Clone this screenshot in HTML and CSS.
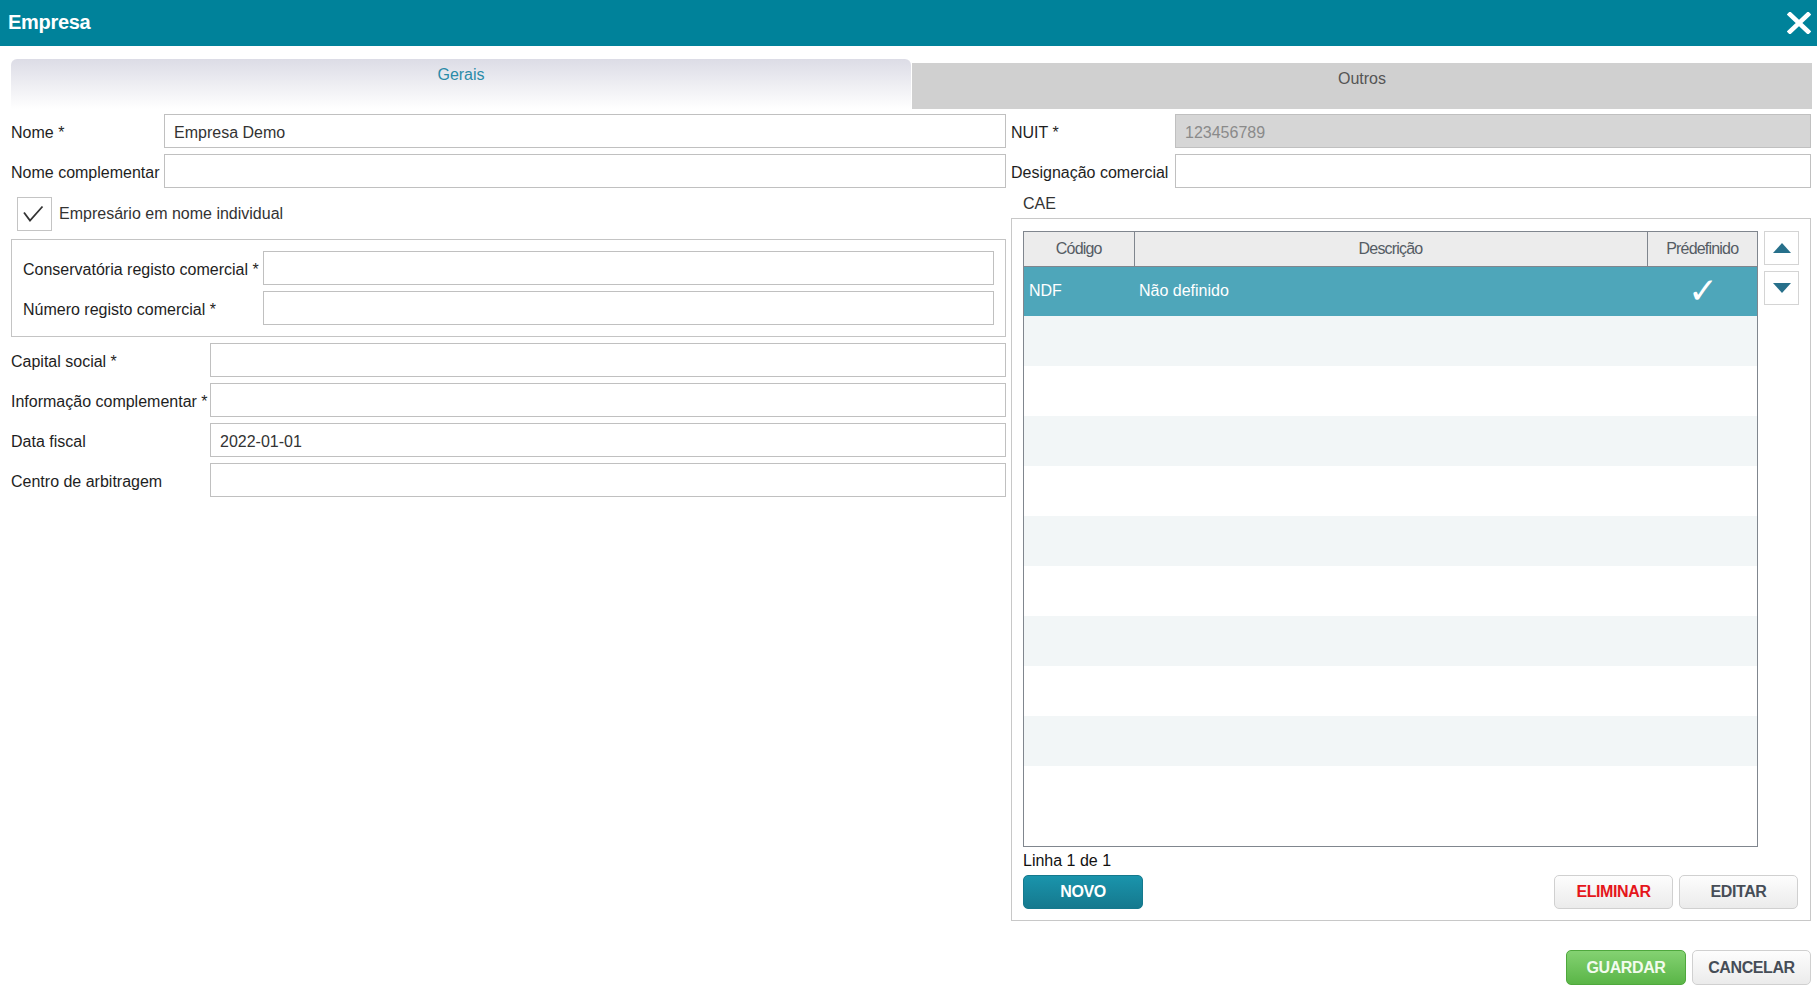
FILE: index.html
```html
<!DOCTYPE html>
<html lang="pt">
<head>
    <meta charset="UTF-8">
    <meta name="viewport" content="width=device-width, initial-scale=1.0">
    <title>Empresa</title>
    <link rel="stylesheet" href="styles.css">
</head>
<body>
    <div class="titlebar">
        <h1>Empresa</h1>
        <button class="close-btn" title="Fechar">
            <svg width="24" height="22" viewBox="0 0 24 22">
                <path d="M3 2.5 L21 19.5 M21 2.5 L3 19.5" stroke="#fff" stroke-width="4.6" stroke-linecap="square" fill="none"/>
            </svg>
        </button>
    </div>

    <div class="dialog">
        <div class="tabs">
            <div class="tab active">Gerais</div>
            <div class="tab">Outros</div>
        </div>

        <div class="content">
            <div class="col-left">
                <div class="field w-nome">
                    <label>Nome *</label>
                    <input type="text" value="Empresa Demo">
                </div>
                <div class="field w-nome">
                    <label>Nome complementar</label>
                    <input type="text">
                </div>

                <div class="check-row">
                    <span class="checkbox">
                        <svg width="33" height="32" viewBox="0 0 33 32">
                            <path d="M6 14.5 L12 22.5 L24.5 8.5" stroke="#333" stroke-width="1.8" fill="none"/>
                        </svg>
                    </span>
                    <span>Empresário em nome individual</span>
                </div>

                <div class="group">
                    <div class="field w-group">
                        <label>Conservatória registo comercial *</label>
                        <input type="text">
                    </div>
                    <div class="field w-group">
                        <label>Número registo comercial *</label>
                        <input type="text">
                    </div>
                </div>

                <div class="field w-capital">
                    <label>Capital social *</label>
                    <input type="text">
                </div>
                <div class="field w-capital">
                    <label>Informação complementar *</label>
                    <input type="text">
                </div>
                <div class="field w-capital">
                    <label>Data fiscal</label>
                    <input type="text" value="2022-01-01">
                </div>
                <div class="field w-capital">
                    <label>Centro de arbitragem</label>
                    <input type="text">
                </div>
            </div>

            <div class="col-right">
                <div class="field w-right">
                    <label>NUIT *</label>
                    <input type="text" value="123456789" disabled>
                </div>
                <div class="field w-right">
                    <label>Designação comercial</label>
                    <input type="text">
                </div>

                <div class="cae-label">CAE</div>
                <div class="cae-box">
                    <div class="cae-top">
                        <div class="grid-wrap">
                            <table class="grid">
                                <colgroup>
                                    <col class="c-code">
                                    <col>
                                    <col class="c-def">
                                </colgroup>
                                <thead>
                                    <tr>
                                        <th>Código</th>
                                        <th>Descrição</th>
                                        <th>Prédefinido</th>
                                    </tr>
                                </thead>
                                <tbody>
                                    <tr class="selected">
                                        <td>NDF</td>
                                        <td>Não definido</td>
                                        <td class="tick">&#10003;</td>
                                    </tr>
                                    <tr><td></td><td></td><td></td></tr>
                                    <tr><td></td><td></td><td></td></tr>
                                    <tr><td></td><td></td><td></td></tr>
                                    <tr><td></td><td></td><td></td></tr>
                                    <tr><td></td><td></td><td></td></tr>
                                    <tr><td></td><td></td><td></td></tr>
                                    <tr><td></td><td></td><td></td></tr>
                                    <tr><td></td><td></td><td></td></tr>
                                    <tr><td></td><td></td><td></td></tr>
                                </tbody>
                            </table>
                        </div>
                        <div class="order-btns">
                            <button class="order-btn" title="Subir">
                                <svg width="18" height="10" viewBox="0 0 18 10"><path d="M0 10 L9 0 L18 10 Z" fill="#27708b"/></svg>
                            </button>
                            <button class="order-btn" title="Descer">
                                <svg width="18" height="10" viewBox="0 0 18 10"><path d="M0 0 L18 0 L9 10 Z" fill="#27708b"/></svg>
                            </button>
                        </div>
                    </div>

                    <div class="grid-count">Linha 1 de 1</div>
                    <div class="grid-actions">
                        <button class="btn btn-primary">NOVO</button>
                        <div class="spacer"></div>
                        <button class="btn btn-danger">ELIMINAR</button>
                        <button class="btn">EDITAR</button>
                    </div>
                </div>
            </div>
        </div>

        <div class="actions">
            <button class="btn btn-success">GUARDAR</button>
            <button class="btn">CANCELAR</button>
        </div>
    </div>
</body>
</html>
```

FILE: styles.css
```css
* {
    margin: 0;
    padding: 0;
    box-sizing: border-box;
}

body {
    font-family: "Liberation Sans", Arial, sans-serif;
    font-size: 16px;
    color: #1e1e1e;
    background: #fff;
}

.titlebar {
    height: 46px;
    background: #00829a;
    display: flex;
    align-items: center;
    justify-content: space-between;
    padding: 0 6px 0 8px;
}

.titlebar h1 {
    color: #fff;
    font-size: 20px;
    font-weight: bold;
    letter-spacing: -0.3px;
    margin-top: -1px;
}

.close-btn {
    background: none;
    border: none;
    width: 24px;
    height: 22px;
    display: flex;
    cursor: pointer;
}

.dialog {
    padding: 0 5px 0 11px;
}

/* tabs */
.tabs {
    display: flex;
    align-items: flex-end;
    gap: 1px;
    height: 50px;
    margin-top: 13px;
}

.tab {
    flex: 1;
    text-align: center;
    font-size: 16px;
    line-height: 18px;
    height: 46px;
    padding-top: 7px;
    background: #d0d0d0;
    color: #555;
}

.tab.active {
    height: 50px;
    padding-top: 7px;
    background: linear-gradient(#dcdce6, #fff);
    border-radius: 6px 6px 0 0;
    color: #2b8ba8;
}

/* form */
.content {
    display: flex;
    gap: 5px;
    margin-top: 5px;
    margin-right: 1px;
}

.col-left {
    width: 995px;
    display: flex;
    flex-direction: column;
}

.col-right {
    flex: 1;
    display: flex;
    flex-direction: column;
}

.field {
    display: grid;
    align-items: center;
    height: 34px;
    margin-bottom: 6px;
}

.field label {
    white-space: nowrap;
    padding-top: 3px;
}

.w-nome { grid-template-columns: 153px 1fr; }
.w-group { grid-template-columns: 240px 1fr; }
.w-capital { grid-template-columns: 199px 1fr; }
.w-right { grid-template-columns: 164px 1fr; }

input[type="text"] {
    height: 34px;
    width: 100%;
    border: 1px solid #c0c0c0;
    padding: 3px 9px 0;
    font-family: inherit;
    font-size: 16px;
    color: #333;
    background: #fff;
}

input[type="text"]:disabled {
    background: #d6d6d6;
    color: #8a8a8a;
}

.check-row {
    display: flex;
    align-items: center;
    gap: 7px;
    margin: 3px 0 8px 6px;
    color: #333;
}

.checkbox {
    width: 35px;
    height: 34px;
    border: 1px solid #c4c4c4;
    display: flex;
}

.group {
    border: 1px solid #c4c4c4;
    padding: 11px 11px 5px;
    margin-bottom: 6px;
}

/* CAE */
.cae-label {
    height: 24px;
    padding: 0 12px;
    line-height: 20px;
    color: #333;
}

.cae-box {
    border: 1px solid #c8c8c8;
    padding: 12px 11px 11px;
}

.cae-top {
    display: flex;
    gap: 6px;
}

.grid-wrap {
    flex: 1;
    height: 616px;
    border: 1px solid #80868e;
    overflow: hidden;
}

.grid {
    width: 100%;
    border-collapse: collapse;
    table-layout: fixed;
}

.c-code { width: 110px; }
.c-def { width: 110px; }

.grid th {
    height: 34px;
    background: #ececec;
    border-bottom: 1px solid #80868e;
    border-left: 1px solid #80868e;
    font-weight: normal;
    font-size: 16px;
    letter-spacing: -0.8px;
    color: #555c64;
}

.grid th:first-child {
    border-left: none;
}

.grid td {
    height: 50px;
    padding: 0 5px;
    white-space: nowrap;
}

.grid tbody tr:nth-child(even) {
    background: #f2f6f7;
}

.grid tr.selected {
    background: #4ea6ba;
    color: #fff;
}

.grid td.tick {
    text-align: center;
    font-family: "DejaVu Sans", sans-serif;
    font-size: 36px;
    line-height: 1;
    padding: 0 0 0 2px;
}

.order-btns {
    display: flex;
    flex-direction: column;
    gap: 6px;
}

.order-btn {
    width: 35px;
    height: 34px;
    border: 1px solid #d4d4d4;
    background: #fff;
    display: flex;
    align-items: center;
    justify-content: center;
    cursor: pointer;
}

.grid-count {
    margin-top: 4px;
    line-height: 20px;
    color: #111;
}

.grid-actions {
    display: flex;
    gap: 6px;
    margin-top: 4px;
    margin-right: 1px;
}

.spacer {
    flex: 1;
}

/* buttons */
.btn {
    width: 119px;
    height: 34px;
    border: 1px solid #d0d0d0;
    border-radius: 5px;
    background: linear-gradient(#fdfdfd, #ebebeb);
    font-family: inherit;
    font-size: 16px;
    font-weight: bold;
    letter-spacing: -0.4px;
    color: #464d57;
    cursor: pointer;
}

.btn-primary {
    width: 120px;
    border-color: #15798d;
    background: linear-gradient(#1a94ac, #15798e);
    color: #fff;
}

.btn-danger {
    color: #e5161b;
}

.btn-success {
    width: 120px;
    height: 35px;
    border-color: #4fa83d;
    background: linear-gradient(#84d272, #5ab547);
    color: #f2fbee;
}

.actions {
    display: flex;
    justify-content: flex-end;
    gap: 6px;
    margin-top: 29px;
    margin-right: 1px;
}

.actions .btn {
    height: 35px;
}
```
